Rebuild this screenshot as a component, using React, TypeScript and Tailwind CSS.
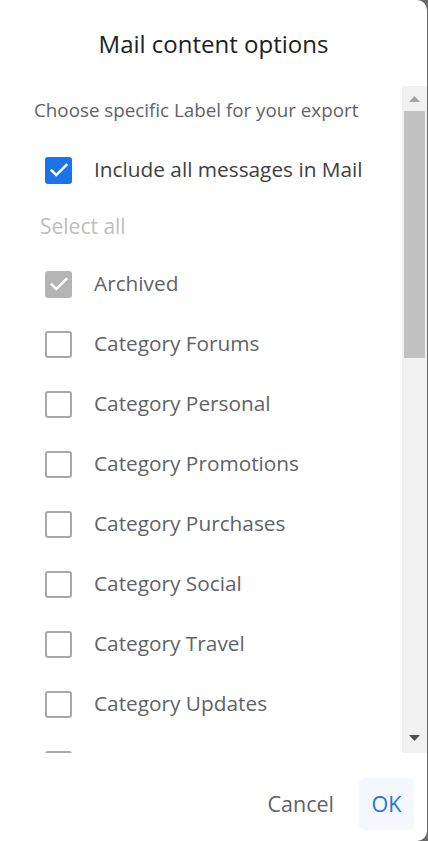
import React from "react";

const labels = [
  "Category Forums",
  "Category Personal",
  "Category Promotions",
  "Category Purchases",
  "Category Social",
  "Category Travel",
  "Category Updates",
];

const font = "font-['Open_Sans',Arial,sans-serif]";

export default function App() {
  return (
    <div className={`h-[841px] w-[428px] bg-[#6b6b6b] ${font}`}>
      <div className="flex h-full w-[427px] flex-col overflow-hidden rounded-r-[10px] bg-white">
        <h1 className="pt-[30px] text-center text-[24px] leading-[28px] text-[#202124]">
          Mail content options
        </h1>

        <div className="mt-[28px] flex h-[667px] overflow-hidden">
          <div className="flex-1 overflow-hidden">
            <p className="pl-[34px] pt-[14px] pb-[20px] text-[18.8px] leading-[20px] text-[#5f6368]">
              Choose specific Label for your export
            </p>
            <Row label="Include all messages in Mail" state="checked" dark />
            <div className="flex h-[54px] items-center pl-[40px] text-[21px] text-[#bdbdbd]">
              Select all
            </div>
            <Row label="Archived" state="disabled" />
            {labels.map((l) => (
              <Row key={l} label={l} state="empty" />
            ))}
            <Row label="" state="empty" />
          </div>
          <Scrollbar />
        </div>

        <div className="mt-[25px] flex items-center justify-end gap-[25px] pr-[13px]">
          <button className="text-[21.5px] text-[#5f6368]">Cancel</button>
          <button className="h-[52px] w-[55px] rounded-[6px] bg-[#f4f7fd] text-[21.5px] text-[#1a73e8]">
            OK
          </button>
        </div>
      </div>
    </div>
  );
}

function Row({
  label,
  state,
  dark,
}: {
  label: string;
  state: "checked" | "disabled" | "empty";
  dark?: boolean;
}) {
  return (
    <div className="flex h-[60px] items-center pl-[45px]">
      <Box state={state} />
      <span
        className={[
          "ml-[22px] whitespace-nowrap text-[20.8px]",
          dark ? "text-[#3c4043]" : "text-[#5f6368]",
        ].join(" ")}
      >
        {label}
      </span>
    </div>
  );
}

function Box({ state }: { state: "checked" | "disabled" | "empty" }) {
  if (state === "empty") {
    return (
      <div className="h-[27px] w-[27px] shrink-0 rounded-[3px] border-[2.5px] border-[#a8a8a8]" />
    );
  }
  return (
    <div
      className={[
        "flex h-[27px] w-[27px] shrink-0 items-center justify-center rounded-[3px]",
        state === "checked" ? "bg-[#1a73e8]" : "bg-[#b4b4b4]",
      ].join(" ")}
    >
      <svg width="22" height="22" viewBox="0 0 24 24" fill="none">
        <path
          d="M4 12.5l5 5L20 6.5"
          stroke="white"
          strokeWidth="2.8"
          strokeLinecap="square"
        />
      </svg>
    </div>
  );
}

function Scrollbar() {
  return (
    <div className="flex w-[25px] shrink-0 flex-col bg-[#f1f1f1]">
      <div className="flex h-[25px] items-center justify-center">
        <svg width="11" height="6" viewBox="0 0 11 6">
          <path d="M5.5 0L11 6H0z" fill="#a3a3a3" />
        </svg>
      </div>
      <div className="ml-[2px] h-[247px] w-[21px] bg-[#c1c1c1]" />
      <div className="flex-1" />
      <div className="flex h-[25px] items-center justify-center pb-[6px]">
        <svg width="11" height="6" viewBox="0 0 11 6">
          <path d="M0 0H11L5.5 6z" fill="#505050" />
        </svg>
      </div>
    </div>
  );
}
